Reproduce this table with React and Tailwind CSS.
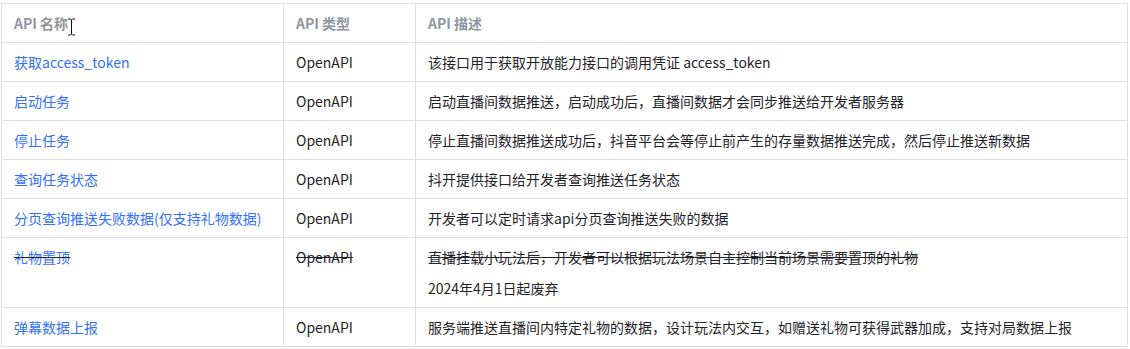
const rows = [
  { name: '获取access_token', type: 'OpenAPI', desc: ['该接口用于获取开放能力接口的调用凭证 access_token'] },
  { name: '启动任务', type: 'OpenAPI', desc: ['启动直播间数据推送，启动成功后，直播间数据才会同步推送给开发者服务器'] },
  { name: '停止任务', type: 'OpenAPI', desc: ['停止直播间数据推送成功后，抖音平台会等停止前产生的存量数据推送完成，然后停止推送新数据'] },
  { name: '查询任务状态', type: 'OpenAPI', desc: ['抖开提供接口给开发者查询推送任务状态'] },
  { name: '分页查询推送失败数据(仅支持礼物数据)', type: 'OpenAPI', desc: ['开发者可以定时请求api分页查询推送失败的数据'] },
  {
    name: '礼物置顶',
    type: 'OpenAPI',
    deprecated: true,
    desc: ['直播挂载小玩法后，开发者可以根据玩法场景自主控制当前场景需要置顶的礼物', '2024年4月1日起废弃'],
  },
  { name: '弹幕数据上报', type: 'OpenAPI', desc: ['服务端推送直播间内特定礼物的数据，设计玩法内交互，如赠送礼物可获得武器加成，支持对局数据上报'] },
]

function Cursor() {
  return (
    <svg className="pointer-events-none absolute left-[67px] top-[18px]" width="9" height="18" viewBox="0 0 9 18">
      <path d="M1 1h2.5l1 1 1-1H8M4.5 2v14M1 17h2.5l1-1 1 1H8" fill="none" stroke="#fff" strokeWidth="2.2" />
      <path d="M1 1h2.5l1 1 1-1H8M4.5 2v14M1 17h2.5l1-1 1 1H8" fill="none" stroke="#111" strokeWidth="1" />
    </svg>
  )
}

export default function App() {
  return (
    <div className="relative min-h-[349px] bg-white pl-px pt-[3px] font-['Noto_Sans_CJK_SC','Noto_Sans',sans-serif] text-[14px]">
      <table className="w-[1127px] table-fixed border-collapse border border-[#dee0e3]">
        <colgroup>
          <col className="w-[282px]" />
          <col className="w-[132px]" />
          <col />
        </colgroup>
        <thead>
          <tr className="h-[39px] text-left text-[#8f959e]">
            <th className="border border-[#dee0e3] px-3 font-semibold">API 名称</th>
            <th className="border border-[#dee0e3] px-3 font-semibold">API 类型</th>
            <th className="border border-[#dee0e3] px-3 font-semibold">API 描述</th>
          </tr>
        </thead>
        <tbody className="text-[#1f2329]">
          {rows.map((row) => (
            <tr key={row.name}>
              <td className="border border-[#dee0e3] px-3 py-2 align-top leading-[22px]">
                <span className={`text-[#3370ff] ${row.deprecated ? 'line-through decoration-[#1f2329]' : ''}`}>{row.name}</span>
              </td>
              <td className={`border border-[#dee0e3] px-3 py-2 align-top leading-[22px] ${row.deprecated ? 'line-through' : ''}`}>
                {row.type}
              </td>
              <td className="border border-[#dee0e3] px-3 py-2 align-top leading-[22px]">
                {row.desc.map((line, i) => (
                  <p key={line} className={i === 0 ? (row.deprecated ? 'line-through' : '') : 'mt-[9px]'}>
                    {line}
                  </p>
                ))}
              </td>
            </tr>
          ))}
        </tbody>
      </table>
      <Cursor />
    </div>
  )
}
